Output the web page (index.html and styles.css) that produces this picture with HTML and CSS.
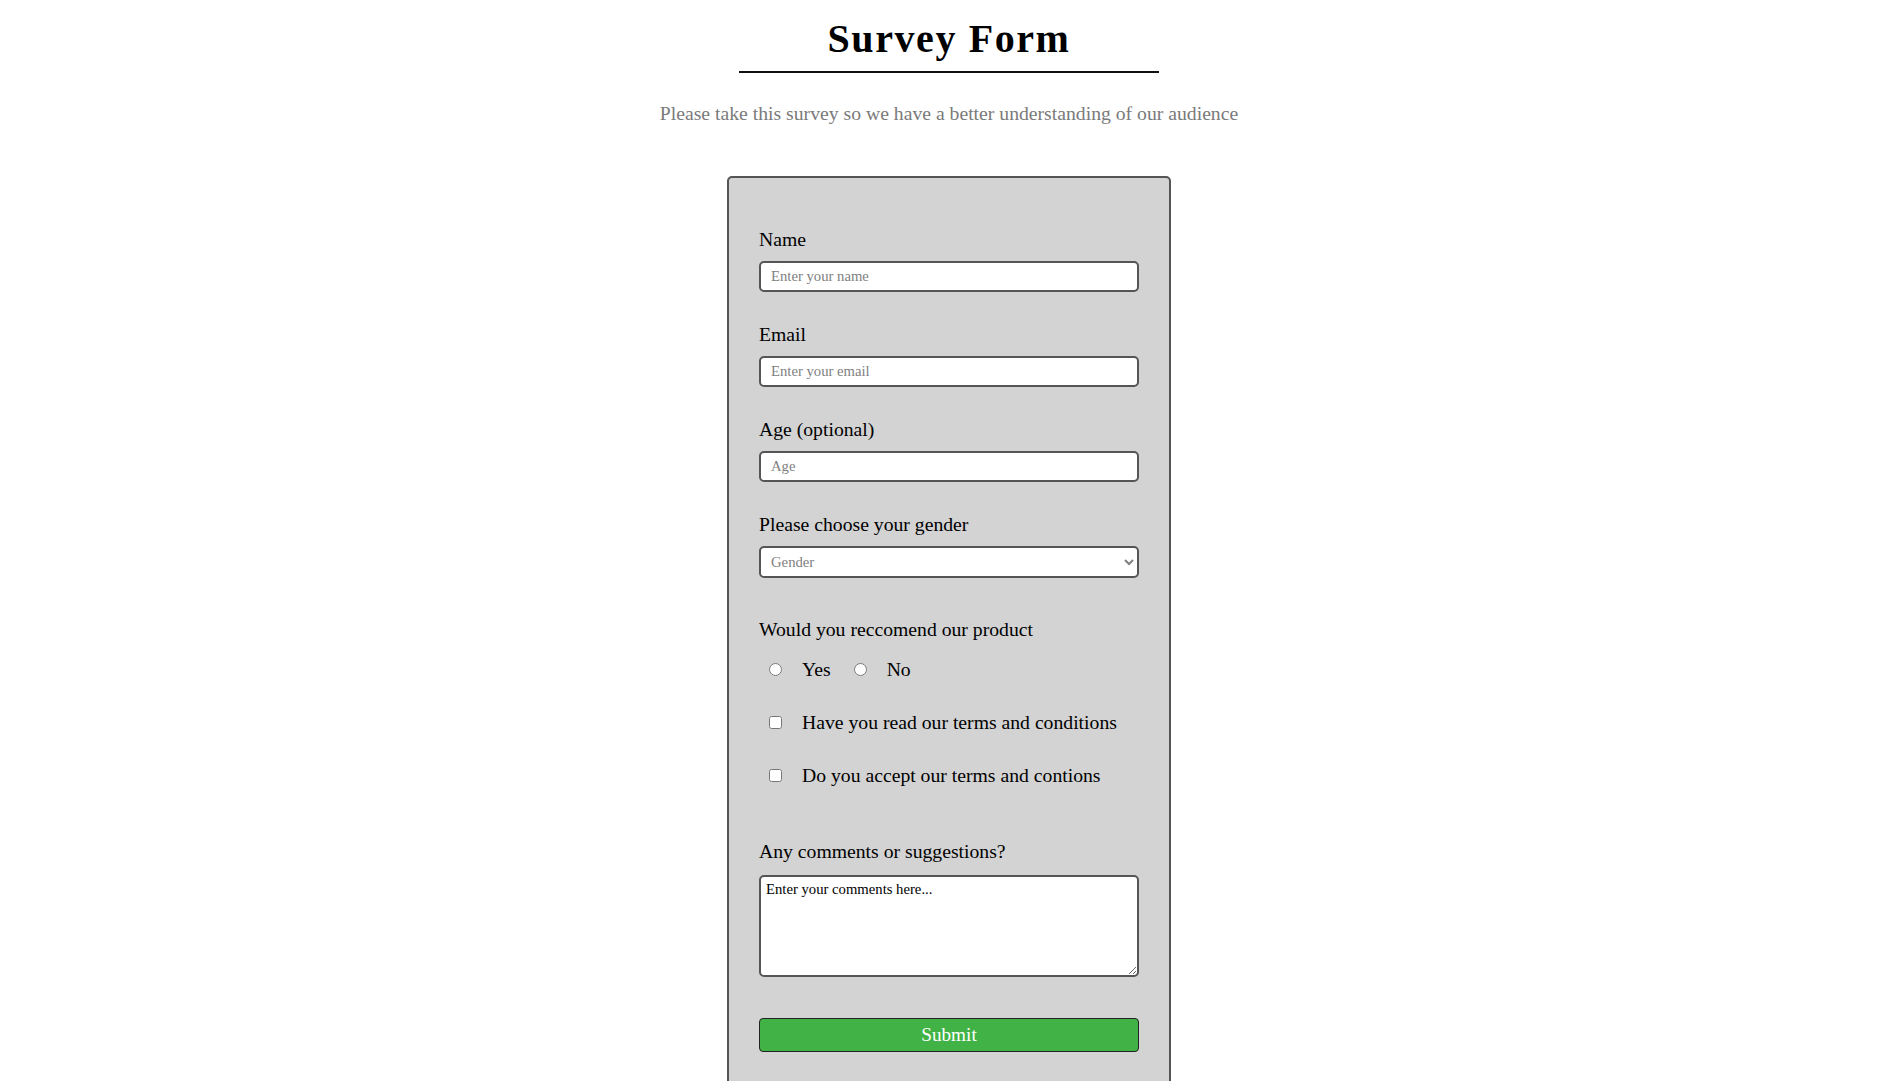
FILE: index.html
```html
<!DOCTYPE html>
<html lang="en">
<head>
<meta charset="utf-8">
<title>Survey Form</title>
<link rel="stylesheet" href="styles.css">
</head>
<body>
  <header class="page-header">
    <h1 class="title" id="title">Survey Form</h1>
    <p class="description" id="description">Please take this survey so we have a better understanding of our audience</p>
  </header>

  <form class="survey" id="survey-form">
    <div class="field">
      <label class="field-label" for="name">Name</label>
      <input class="text-input" id="name" type="text" placeholder="Enter your name">
    </div>
    <div class="field">
      <label class="field-label" for="email">Email</label>
      <input class="text-input" id="email" type="email" placeholder="Enter your email">
    </div>
    <div class="field">
      <label class="field-label" for="number">Age (optional)</label>
      <input class="text-input" id="number" type="number" placeholder="Age">
    </div>
    <div class="field field--select">
      <label class="field-label" for="dropdown">Please choose your gender</label>
      <select class="text-input select-input" id="dropdown">
        <option value="" disabled selected>Gender</option>
        <option value="male">Male</option>
        <option value="female">Female</option>
        <option value="other">Other</option>
      </select>
    </div>

    <div class="choices">
      <p class="field-label">Would you reccomend our product</p>
      <div class="choice-row">
        <label class="choice"><input class="choice-input" type="radio" name="recommend" value="yes">Yes</label>
        <label class="choice"><input class="choice-input" type="radio" name="recommend" value="no">No</label>
      </div>
      <div class="choice-row">
        <label class="choice"><input class="choice-input" type="checkbox" value="read">Have you read our terms and conditions</label>
      </div>
      <div class="choice-row">
        <label class="choice"><input class="choice-input" type="checkbox" value="accept">Do you accept our terms and contions</label>
      </div>
    </div>

    <div class="field field--comments">
      <label class="field-label" for="comments">Any comments or suggestions?</label>
      <textarea class="comments" id="comments" placeholder="Enter your comments here..."></textarea>
    </div>

    <button class="submit" id="submit" type="submit">Submit</button>
  </form>
</body>
</html>
```

FILE: styles.css
```css
html, body {
  margin: 0;
  background: #ffffff;
}

body {
  padding: 0 0 0 3px;
  font-family: "Liberation Serif", "Times New Roman", serif;
  color: #000;
}

.page-header {
  display: flex;
  flex-direction: column;
  align-items: center;
}

.title {
  width: 420px;
  margin: 16px 0 0 0;
  padding: 0 0 9px 0;
  border-bottom: 2px solid #111;
  font-size: 40px;
  line-height: 46px;
  font-weight: bold;
  letter-spacing: 1.6px;
  text-align: center;
}

.description {
  margin: 30px 0 0 0;
  font-size: 19.7px;
  line-height: 21px;
  color: #7a7a7a;
  text-align: center;
}

.survey {
  box-sizing: border-box;
  width: 444px;
  margin: 52px auto 0 auto;
  padding: 50px 30px 40px 30px;
  background: #d3d3d3;
  border: 2px solid #555;
  border-radius: 5px;
  display: flex;
  flex-direction: column;
}

.field {
  display: flex;
  flex-direction: column;
  margin-bottom: 31px;
}

.field--select {
  margin-bottom: 40px;
}

.field-label {
  display: block;
  margin: 0 0 11px 0;
  font-size: 19.7px;
  line-height: 22px;
}

.text-input {
  box-sizing: border-box;
  width: 100%;
  height: 31px;
  margin: 0;
  padding: 0 10px;
  background: #fff;
  border: 2px solid #555;
  border-radius: 5px;
  font-family: inherit;
  font-size: 14.7px;
  color: #000;
  outline: none;
}

.text-input::placeholder {
  color: #808080;
}

.select-input {
  height: 32px;
  padding: 0 6px;
  color: #808080;
}

.choices {
  display: flex;
  flex-direction: column;
  gap: 31px;
  margin-bottom: 54px;
}

.choices .field-label {
  margin-bottom: -13px;
}

.choice-row {
  display: flex;
  gap: 13px;
  height: 22px;
}

.choice {
  display: inline-flex;
  align-items: center;
  font-size: 19.7px;
  line-height: 22px;
}

.choice-input {
  width: 13px;
  height: 13px;
  margin: 0 20px 0 10px;
}

.field--comments {
  margin-bottom: 41px;
}

.field--comments .field-label {
  margin-bottom: 13px;
}

.comments {
  box-sizing: border-box;
  width: 100%;
  height: 102px;
  margin: 0;
  padding: 4px 5px;
  background: #fff;
  border: 2px solid #555;
  border-radius: 5px;
  font-family: inherit;
  font-size: 14.7px;
  color: #000;
  outline: none;
}

.comments::placeholder {
  color: #000;
}

.submit {
  box-sizing: border-box;
  width: 100%;
  height: 34px;
  margin: 0;
  background: #41b346;
  border: 1px solid #222;
  border-radius: 4px;
  color: #fff;
  font-family: inherit;
  font-size: 19.2px;
  cursor: pointer;
}
```
